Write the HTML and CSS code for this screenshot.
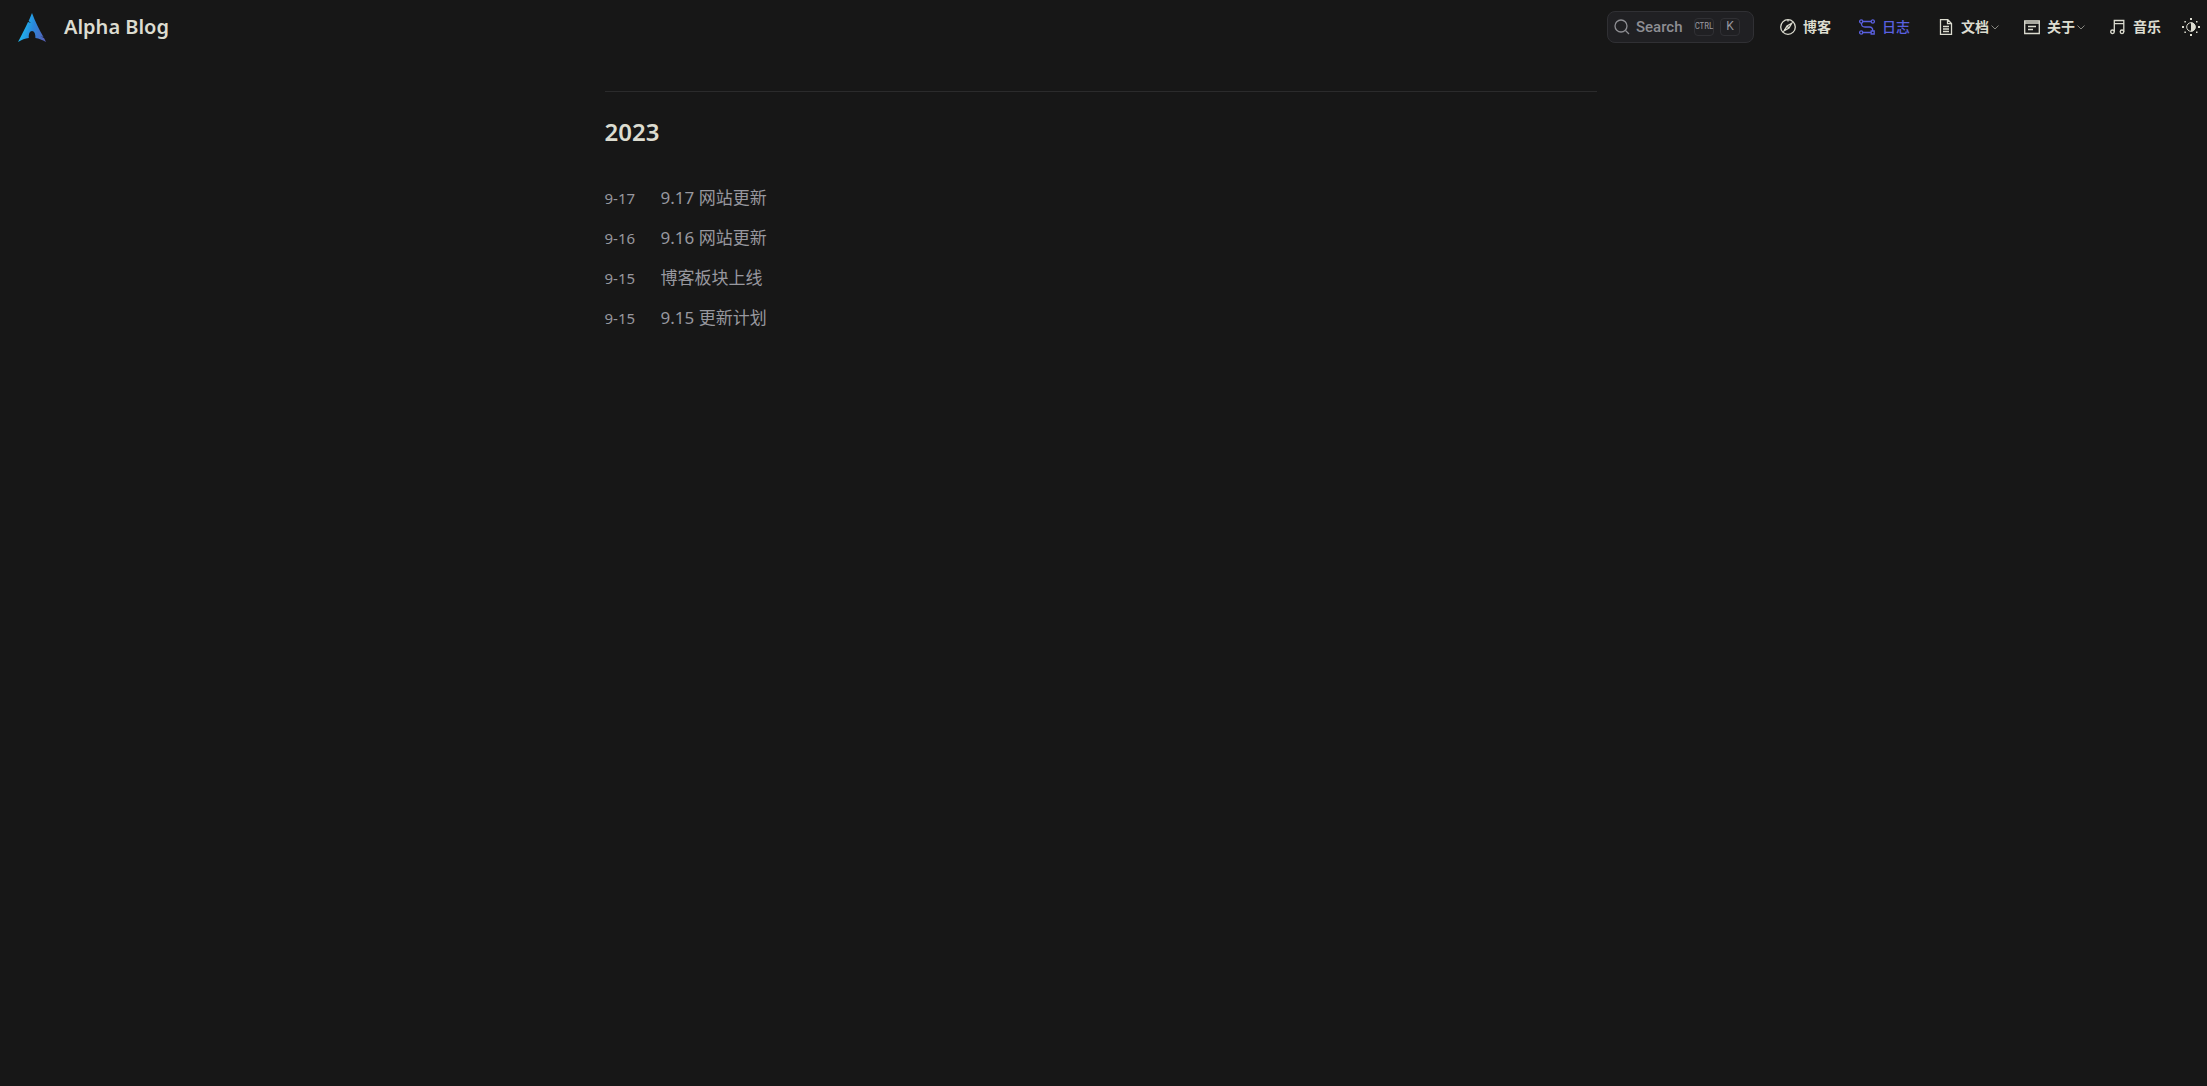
FILE: index.html
```html
<!DOCTYPE html>
<html lang="zh-CN">
<head>
<meta charset="utf-8">
<meta name="viewport" content="width=device-width, initial-scale=1">
<title>Alpha Blog</title>
<link rel="stylesheet" href="styles.css">
</head>
<body>
<header class="header">
  <a class="brand" href="#">
    <svg class="logo" viewBox="0 0 28 29" aria-hidden="true">
      <defs><linearGradient id="logo-fill" x1="0" y1="0.7" x2="1" y2="1"><stop offset="0" stop-color="#1cc3f3"/><stop offset="0.45" stop-color="#2a86da"/><stop offset="1" stop-color="#5c5cb4"/></linearGradient></defs>
      <path fill="url(#logo-fill)" d="M14 0c-1.200 3-2 5-3.400 8.100l2.400 2-3-1.100C7.400 14.700 4 21.500 0 29c3.900-2.200 7-3.500 10.800-4-.3-4 .8-7 3.200-7s3.600 3 3.400 7c3.800.6 6.800 1.800 10.600 4l-2-3.900-3.400-1.800 2.900.6C20.600 16 17.500 9 14 0z"/>
    </svg>
    <span class="title">Alpha Blog</span>
  </a>
  <button class="search" type="button">
    <svg class="search-icon" viewBox="0 0 16 16" aria-hidden="true"><circle cx="7" cy="7" r="6"/><path d="M11.500 11.500L15 15"/></svg>
    <span class="search-text">Search</span>
    <kbd class="key key-ctrl">CTRL</kbd>
    <kbd class="key">K</kbd>
  </button>
  <nav class="nav">
    <a class="link" href="#">
      <svg class="icon" viewBox="0 0 16 16" aria-hidden="true"><circle cx="8" cy="8" r="7.300"/><path d="M11.800 4.200L9 9 4.200 11.800 7 7zM7 7l2 2M8 1v1.500"/></svg>
      <span>博客</span>
    </a>
    <a class="link active" href="#" aria-current="page">
      <svg class="icon" viewBox="0 0 16 16" aria-hidden="true"><circle cx="2.200" cy="2.500" r="1.600"/><circle cx="13.800" cy="2.500" r="1.600"/><circle cx="2.200" cy="13.500" r="1.600"/><path d="M12.200 12h3v3h-3zM3.800 2.500h8.400M2.400 4.100C2.400 7 3.500 8 6 8h4.500c2.200 0 3.300 1.500 3.300 4M3.800 13.500h8.400"/></svg>
      <span>日志</span>
    </a>
    <button class="link" type="button" aria-haspopup="true">
      <svg class="icon" viewBox="0 0 16 16" aria-hidden="true"><path d="M2.500.7h7.300l3.700 3.800v10.800h-11zM9.500.7v4h4M5 7.500h6M5 10h6M5 12.500h6"/></svg>
      <span>文档</span>
      <svg class="chevron" viewBox="0 0 8 8" aria-hidden="true"><path d="M.5 2.500L4 6l3.500-3.500"/></svg>
    </button>
    <button class="link" type="button" aria-haspopup="true">
      <svg class="icon" viewBox="0 0 16 16" aria-hidden="true"><path d="M.7 2h14.600v12.500H.7zM.7 4h14.600M4 7.500h8M4 10.500h5"/></svg>
      <span>关于</span>
      <svg class="chevron" viewBox="0 0 8 8" aria-hidden="true"><path d="M.5 2.500L4 6l3.500-3.500"/></svg>
    </button>
    <a class="link" href="#">
      <svg class="icon" viewBox="0 0 16 16" aria-hidden="true"><circle cx="2.500" cy="12.800" r="1.800"/><circle cx="12" cy="12.800" r="1.800"/><path d="M4.300 12.800V1.500h9.500v11.300M4.300 4.700h9.500"/></svg>
      <span>音乐</span>
    </a>
  </nav>
  <button class="theme" type="button" aria-label="Toggle theme">
    <svg class="sun" viewBox="0 0 18 18" aria-hidden="true"><circle class="ring" cx="9" cy="9" r="4.300"/><path d="M9 4.500a4.500 4.500 0 0 1 0 9zM8 0h2v2H8zM8 16h2v2H8zM0 8h2v2H0zM16 8h2v2h-2zM2.400 3h1.500v1.500H2.400zM14 3h1.500v1.500H14zM2.400 13.600h1.500v1.500H2.400zM14 13.600h1.500v1.500H14z"/></svg>
  </button>
</header>
<main class="page">
  <div class="content">
    <h2 class="year">2023</h2>
    <ul class="posts">
      <li class="post"><time class="date" datetime="2023-09-17">9-17</time><a class="post-link" href="#">9.17 网站更新</a></li>
      <li class="post"><time class="date" datetime="2023-09-16">9-16</time><a class="post-link" href="#">9.16 网站更新</a></li>
      <li class="post"><time class="date" datetime="2023-09-15">9-15</time><a class="post-link" href="#">博客板块上线</a></li>
      <li class="post"><time class="date" datetime="2023-09-15">9-15</time><a class="post-link" href="#">9.15 更新计划</a></li>
    </ul>
  </div>
</main>
</body>
</html>
```
FILE: styles.css
```css
* { box-sizing: border-box; }

body {
  margin: 0;
  background: #171717;
  color: #dcdcd0;
  font-family: "Noto Sans", "Noto Sans CJK SC", sans-serif;
  font-size: 17px;
}

a { color: inherit; text-decoration: none; }

button {
  margin: 0;
  padding: 0;
  border: 0;
  background: none;
  color: inherit;
  font: inherit;
  cursor: pointer;
}

svg { display: block; flex: none; }

.header {
  display: flex;
  align-items: center;
  height: 54px;
  padding: 0 7px 0 18px;
}

.brand {
  display: flex;
  align-items: center;
  gap: 18px;
  margin-right: auto;
}

.logo { width: 28px; height: 29px; }

.title { font-size: 20px; font-weight: 600; line-height: 28px; }

.search {
  display: flex;
  align-items: center;
  width: 147px;
  height: 32px;
  padding: 0 13px 0 6px;
  border: 1px solid #303034;
  border-radius: 8px;
  background: #202023;
  color: #8e8e93;
}

.search-icon {
  width: 16px;
  height: 16px;
  fill: none;
  stroke: currentColor;
  stroke-width: 1.3;
}

.search-text {
  margin: 0 auto 0 6px;
  font-family: Roboto, sans-serif;
  font-size: 15px;
  font-weight: 500;
}

.key {
  width: 20px;
  height: 18px;
  margin-left: 6px;
  border: 1px solid #303034;
  border-radius: 4px;
  color: #98989f;
  font: 12px/15px Roboto, sans-serif;
  text-align: center;
}

.key-ctrl {
  display: flex;
  justify-content: center;
  font: 9px/14px "Liberation Sans Narrow", "Roboto Condensed", Roboto, sans-serif;
}

.nav {
  display: flex;
  gap: 28px;
  margin-left: 26px;
  font-size: 14px;
  font-weight: 700;
  line-height: 20px;
}

.link { display: flex; align-items: center; gap: 7px; }

.active { color: #5a60e0; font-weight: 500; }

.icon {
  width: 16px;
  height: 16px;
  fill: none;
  stroke: currentColor;
  stroke-width: 1.3;
}

.chevron {
  width: 8px;
  height: 8px;
  margin: 0 -3px 0 -5px;
  fill: none;
  stroke: #85857f;
}

.theme { margin-left: 21px; }

.sun { width: 18px; height: 18px; fill: currentColor; }

.ring { fill: none; stroke: currentColor; }

.page { padding: 37px 33px 0 27px; }

.content {
  max-width: 992px;
  margin: 0 auto;
  border-top: 1px solid #2b2b2c;
}

.year {
  margin: 24px 0 31px;
  font-size: 24px;
  font-weight: 600;
  line-height: 32px;
}

.posts { margin: 0; padding: 0; list-style: none; color: #98989f; }

.post {
  display: grid;
  grid-template-columns: 56px 1fr;
  align-items: baseline;
  height: 40px;
  line-height: 38px;
}

.date { font-size: 15px; }
```
